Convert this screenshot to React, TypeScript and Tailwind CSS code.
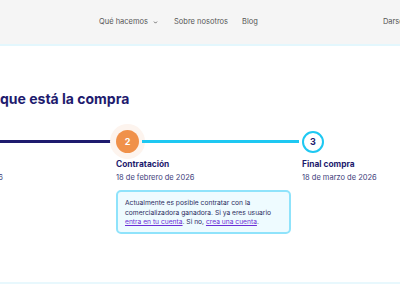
import React from 'react';

const font = { fontFamily: 'Inter, "Noto Sans", sans-serif' };

type Step = {
    n: number;
    title: string;
    date: string;
    state: 'done' | 'current' | 'next';
};

const steps: Step[] = [
    { n: 1, title: 'Subasta', date: '18 de enero de 2026', state: 'done' },
    { n: 2, title: 'Contratación', date: '18 de febrero de 2026', state: 'current' },
    { n: 3, title: 'Final compra', date: '18 de marzo de 2026', state: 'next' },
];

const Circle: React.FC<{ step: Step }> = ({ step }) => {
    if (step.state === 'current') {
        return (
            <div className="w-[35px] h-[35px] -ml-[6px] rounded-full bg-[#fdf4ee] flex items-center justify-center shrink-0">
                <div className="w-[23px] h-[23px] rounded-full bg-[#f0914a] text-white text-[9px] font-bold flex items-center justify-center">
                    {step.n}
                </div>
            </div>
        );
    }
    if (step.state === 'next') {
        return (
            <div className="w-[22px] h-[22px] rounded-full border-2 border-[#1ec8f2] bg-white text-[#1e1b6e] text-[9px] font-bold flex items-center justify-center shrink-0">
                {step.n}
            </div>
        );
    }
    return (
        <div className="w-[23px] h-[23px] rounded-full bg-[#1e1b6e] text-white text-[9px] font-bold flex items-center justify-center shrink-0">
            {step.n}
        </div>
    );
};

export default function App() {
    return (
        <div className="w-[400px] h-[300px] overflow-hidden bg-white" style={font}>
            {/* Header */}
            <header className="h-[46px] bg-[#f5f5f5] border-b-2 border-[#e3f7fd] flex items-center overflow-hidden">
                <nav className="flex items-center text-[7.5px] text-[#555] ml-[99px] whitespace-nowrap">
                    <span>Qué hacemos</span>
                    <svg className="ml-[5px]" width="5" height="5" viewBox="0 0 24 24" fill="none" stroke="currentColor" strokeWidth={4} strokeLinecap="round" strokeLinejoin="round">
                        <path d="M6 9l6 6 6-6" />
                    </svg>
                    <span className="ml-[16px]">Sobre nosotros</span>
                    <span className="ml-[14px]">Blog</span>
                    <span className="ml-[125px]">Darse de alta</span>
                </nav>
            </header>

            {/* Status */}
            <section className="h-[238px] border-b-2 border-[#e8f8fd] overflow-hidden">
                <h2 className="mt-[46px] text-[14px] font-bold text-[#1e1b6e] leading-none whitespace-nowrap">
                    que está la compra
                </h2>

                <div className="mt-[18px] -ml-[70px] flex">
                    {steps.map((s, i) => (
                        <div key={s.n} className="w-[186px] shrink-0 flex flex-col">
                            <div className="h-[35px] flex items-center">
                                <Circle step={s} />
                                {i < steps.length - 1 && (
                                    <div
                                        className={
                                            s.state === 'done'
                                                ? 'flex-1 h-[3px] bg-[#1e1b6e] ml-[4px] mr-[3px]'
                                                : 'flex-1 h-[3px] bg-[#1ec8f2] ml-[-3px] mr-[3px]'
                                        }
                                    />
                                )}
                            </div>
                            <div className="text-[8.4px] font-bold text-[#1e1b6e] leading-[10px] whitespace-nowrap">{s.title}</div>
                            <div className="mt-[4px] text-[7.5px] text-[#3d3c7a] leading-[10px] whitespace-nowrap">{s.date}</div>
                            {s.state === 'current' && (
                                <div className="mt-[7px] w-[175px] rounded-[5px] border-2 border-[#8fe3fb] bg-[#eefbff] pl-[7px] pr-[6px] pt-[7px] pb-[4px] text-[6.7px] leading-[9.5px] text-[#2d2c5e]">
                                    Actualmente es posible contratar con la comercializadora ganadora. Si ya eres usuario{' '}
                                    <a className="text-[#6b2fd6] underline">entra en tu cuenta</a>. Si no,{' '}
                                    <a className="text-[#6b2fd6] underline">crea una cuenta</a>.
                                </div>
                            )}
                        </div>
                    ))}
                </div>
            </section>
        </div>
    );
}
